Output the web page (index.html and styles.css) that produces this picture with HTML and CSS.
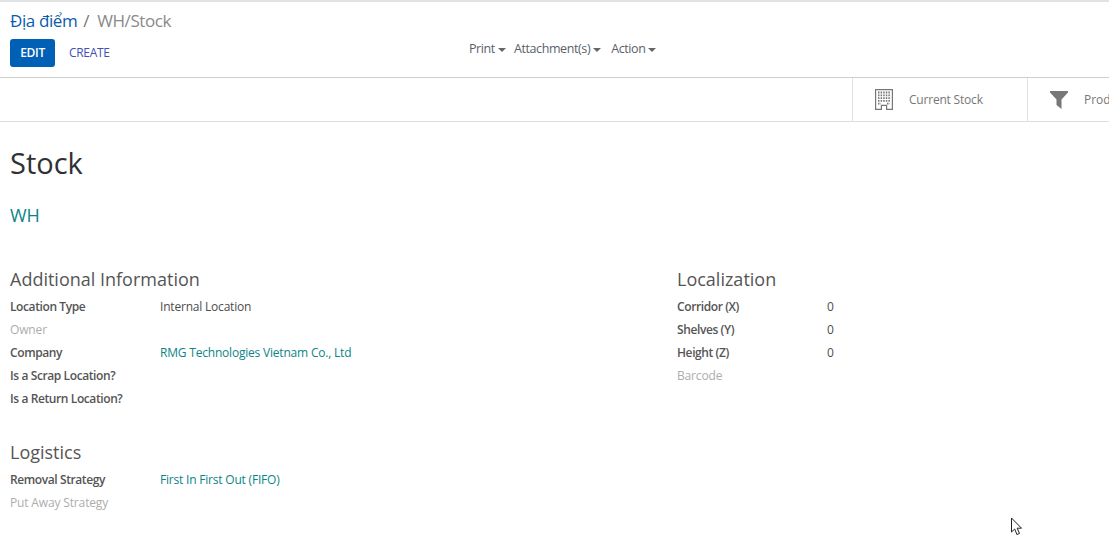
FILE: index.html
```html
<!DOCTYPE html>
<html lang="vi">
<head>
<meta charset="utf-8">
<title>WH/Stock</title>
<link rel="stylesheet" href="styles.css">
</head>
<body>
<header class="control">
  <div class="crumbs"><a class="crumb-link">Địa điểm</a><span class="crumb-sep">/</span><span class="crumb-cur">WH/Stock</span></div>
  <div class="control-row">
    <div class="actions">
      <button class="btn-edit">EDIT</button>
      <button class="btn-create">CREATE</button>
    </div>
    <div class="menus">
      <span class="menu">Print<i class="caret"></i></span>
      <span class="menu">Attachment(s)<i class="caret"></i></span>
      <span class="menu">Action<i class="caret"></i></span>
    </div>
  </div>
</header>
<div class="statbar">
  <div class="stat stat-stock">
    <svg class="stat-icon" width="18" height="21" viewBox="0 0 18 21">
      <path fill="#777" fill-rule="evenodd" d="M0 0h18v21H11v-4H7v4H0zM1.2 1.2v18.6h4.6v-4h6.4v4h4.6V1.2z"/>
      <path stroke="#777" stroke-width="1.8" stroke-dasharray="1.5 1.1" fill="none" d="M3 3.5h12M3 6.3h12M3 9.1h12M3 11.9h12M3 14.7h3M12 14.7h3"/>
    </svg>
    <span class="stat-label">Current Stock</span>
  </div>
  <div class="stat stat-prod">
    <svg class="stat-icon" width="18" height="18" viewBox="0 0 18 18">
      <path fill="#777" d="M0 0h18v1.5L11.5 8.5V18L6.5 14V8.5L0 1.5z"/>
    </svg>
    <span class="stat-label">Products</span>
  </div>
</div>
<main class="sheet">
  <h1 class="title">Stock</h1>
  <div class="parent"><a>WH</a></div>
  <div class="columns">
    <div class="col-left">
      <h2 class="group-title">Additional Information</h2>
      <div class="row"><span class="lbl">Location Type</span><span class="val">Internal Location</span></div>
      <div class="row"><span class="lbl muted">Owner</span></div>
      <div class="row"><span class="lbl">Company</span><a class="val link">RMG Technologies Vietnam Co., Ltd</a></div>
      <div class="row"><span class="lbl">Is a Scrap Location?</span></div>
      <div class="row"><span class="lbl">Is a Return Location?</span></div>
      <h2 class="group-title second">Logistics</h2>
      <div class="row"><span class="lbl">Removal Strategy</span><a class="val link">First In First Out (FIFO)</a></div>
      <div class="row"><span class="lbl muted">Put Away Strategy</span></div>
    </div>
    <div class="col-right">
      <h2 class="group-title">Localization</h2>
      <div class="row"><span class="lbl">Corridor (X)</span><span class="val">0</span></div>
      <div class="row"><span class="lbl">Shelves (Y)</span><span class="val">0</span></div>
      <div class="row"><span class="lbl">Height (Z)</span><span class="val">0</span></div>
      <div class="row"><span class="lbl muted">Barcode</span></div>
    </div>
  </div>
</main>
<svg class="cursor" width="13" height="20" viewBox="0 0 13 20">
  <path fill="#fff" stroke="#222" stroke-width="1" d="M1.5 1v14l3.2-3 2.2 5.5 2.6-1-2.3-5.3h4.3z"/>
</svg>
</body>
</html>
```
FILE: styles.css
```css
* { box-sizing: border-box; }
html, body { margin: 0; height: 100%; }
body {
  background: #fff;
  font-family: "Open Sans", "Noto Sans", sans-serif;
  font-size: 12px;
  color: #4c4c4c;
  overflow: hidden;
  position: relative;
}
.control {
  height: 78px;
  border-top: 2px solid #e2e2e2;
  border-bottom: 1px solid #cfcfcf;
  padding: 9px 10px 0;
}
.crumbs { font-size: 17px; line-height: 20px; letter-spacing: -0.4px; display: flex; }
.crumb-link { color: #0b5cad; }
.crumb-sep { color: #777; margin: 0 8px 0 6px; }
.crumb-cur { color: #8a8a8a; }
.control-row { display: flex; margin-top: 8px; position: relative; }
.actions { display: flex; align-items: center; }
.btn-edit {
  width: 45px; height: 28px;
  background: #0060b6; color: #fff;
  border: 0; border-radius: 3px;
  font: 600 12px "Open Sans", sans-serif;
  letter-spacing: -0.3px;
  padding: 0 0 2px;
}
.btn-create {
  margin-left: 14px;
  background: none; border: 0; padding: 0 0 2px;
  color: #3f51b5;
  font: 400 12px "Open Sans", sans-serif;
  letter-spacing: -0.3px;
}
.menus { position: absolute; left: 459px; top: 1px; display: flex; gap: 9px; color: #5a5f6b; font-size: 12.5px; line-height: 17px; letter-spacing: -0.4px; }
.menu { display: flex; align-items: center; }
.menu:first-child { margin-right: -1px; }
.menu:nth-child(2) { margin-right: 1px; }
.caret {
  width: 0; height: 0; margin-left: 3px; margin-top: 2px;
  border-left: 4px solid transparent;
  border-right: 4px solid transparent;
  border-top: 4px solid #666;
}
.statbar {
  height: 44px;
  border-bottom: 1px solid #dedede;
  display: flex;
  justify-content: flex-end;
  overflow: hidden;
}
.stat { display: flex; align-items: center; flex: none; border-left: 1px solid #e2e2e2; height: 100%; }
.stat-stock { width: 175px; padding-left: 22px; }
.stat-stock .stat-label { margin-left: 16px; letter-spacing: -0.2px; }
.stat-prod { width: 82px; padding-left: 22px; }
.stat-prod .stat-label { margin-left: 16px; }
.stat-icon { flex: none; }
.stat-label { font-size: 12px; color: #777; white-space: nowrap; }
.sheet { padding: 0 10px; }
.title { margin: 21px 0 0; font-size: 29px; font-weight: 400; line-height: 40px; color: #2f3136; }
.parent { margin-top: 20px; font-size: 18px; line-height: 24px; color: #0b8586; }
.columns { display: flex; margin-top: 39px; }
.col-left { width: 667px; flex: none; }
.col-right { flex: 1; }
.group-title { margin: 0 0 3px; font-size: 18px; font-weight: 400; line-height: 26px; color: #555; letter-spacing: 0; }
.group-title.second { margin-top: 29px; }
.row { display: flex; height: 23px; align-items: center; letter-spacing: -0.2px; }
.lbl { width: 150px; flex: none; font-weight: 600; color: #555; letter-spacing: -0.4px; }
.lbl.muted { font-weight: 400; color: #adadad; letter-spacing: -0.15px; }
.val { color: #4c4c4c; }
.link { color: #0b8586; }
.cursor { position: absolute; left: 1010px; top: 517px; }
```
